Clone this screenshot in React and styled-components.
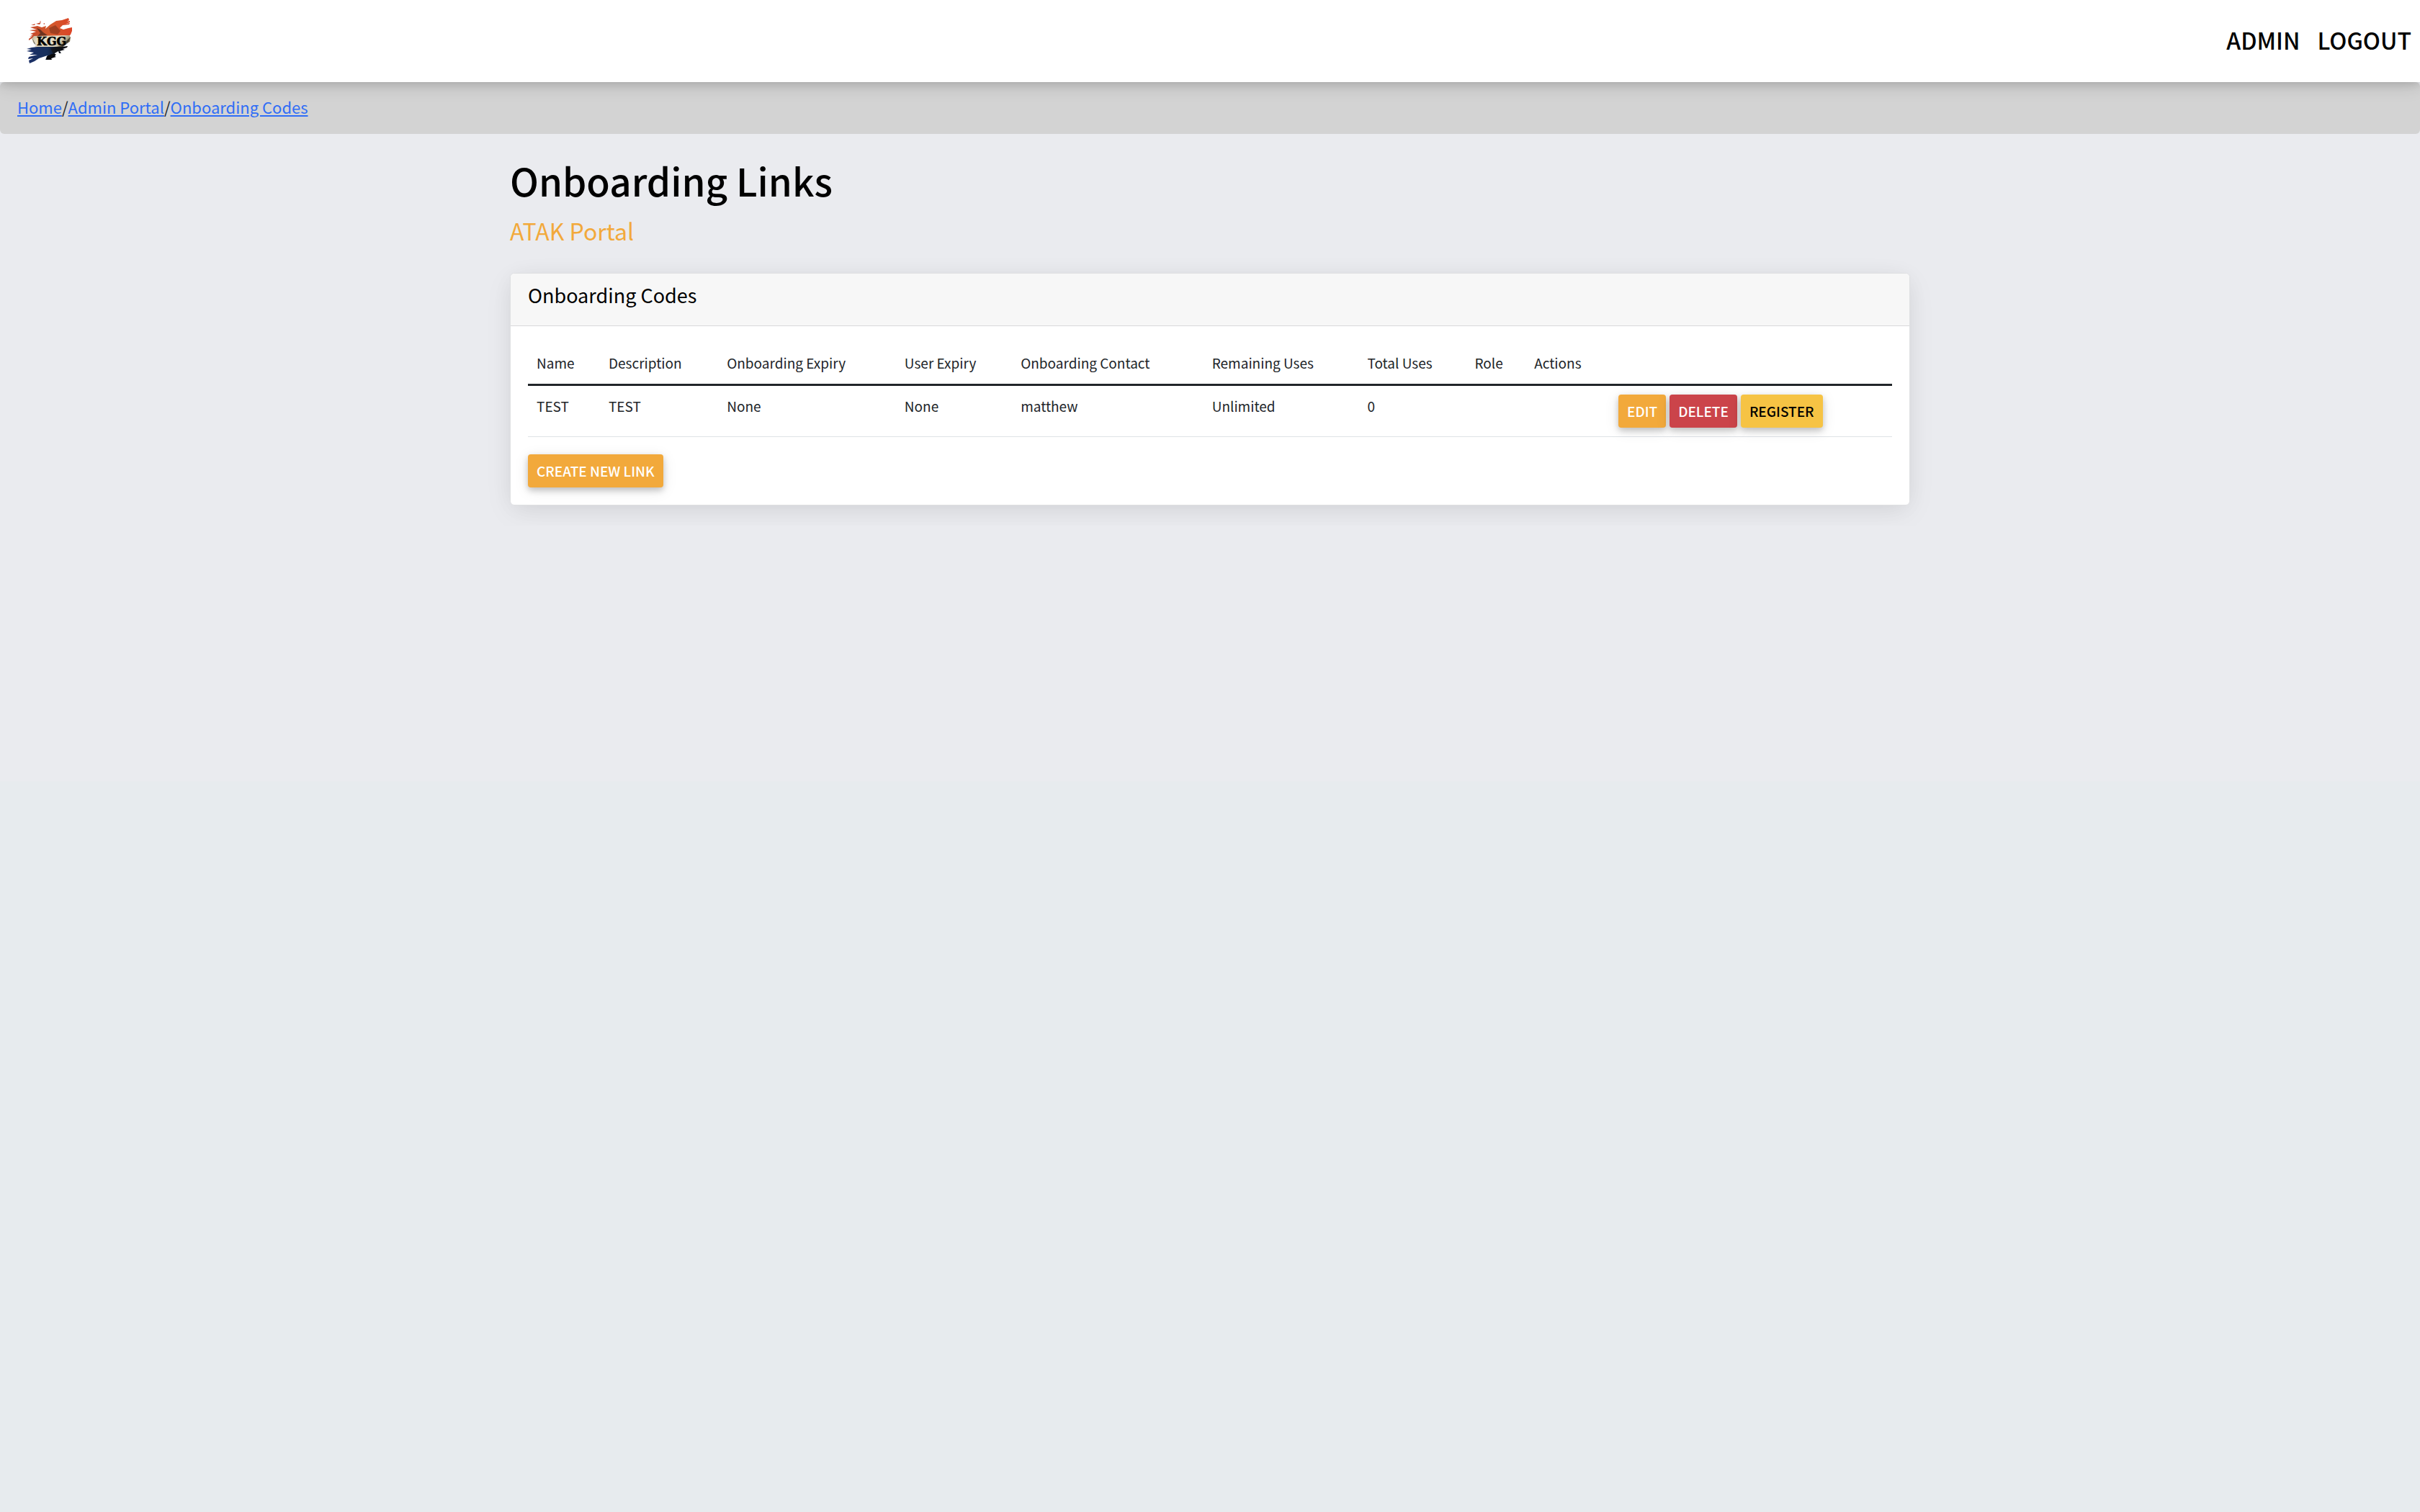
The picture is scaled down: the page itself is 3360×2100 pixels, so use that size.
import React from "react";
import styled, { createGlobalStyle, css } from "styled-components";

const GlobalStyle = createGlobalStyle`
  *, *::before, *::after { box-sizing: border-box; }
  html {
    min-height: 100%;
    background: linear-gradient(#eaebef 1085px, #e7ebee 1085px);
  }
  body {
    margin: 0;
    font-family: "Noto Sans CJK SC", "Noto Sans", sans-serif;
    font-size: 19px;
    line-height: 32px;
    color: #212529;
  }
`;

const Navbar = styled.header`
  position: relative;
  z-index: 1;
  display: flex;
  align-items: center;
  justify-content: space-between;
  height: 114px;
  padding: 0 12px 0 32px;
  background: #fff;
  box-shadow: 0 4px 24px rgba(0, 0, 0, 0.14), 0 2px 12px rgba(0, 0, 0, 0.12);
`;

const Brand = styled.a`
  display: block;
  height: 72px;
`;

const NavLinks = styled.nav`
  display: flex;
  gap: 24px;
  padding-bottom: 4px;
`;

const NavLink = styled.a`
  font-size: 32px;
  line-height: 48px;
  font-weight: 500;
  color: #000;
  text-decoration: none;
`;

const Breadcrumb = styled.nav`
  display: flex;
  height: 72px;
  padding: 18px 24px;
  font-size: 22px;
  background: #d3d3d3;
  border-radius: 6px;
`;

const Crumb = styled.a`
  color: #2f6df6;
  text-decoration: underline;
`;

const Container = styled.main`
  max-width: 1944px;
  margin: 0 auto;
  padding: 28px 0;
`;

const Title = styled.h1`
  margin: 0;
  font-size: 53px;
  line-height: 72px;
  font-weight: 500;
  color: #000;
`;

const Subtitle = styled.h2`
  margin: 10px 0 35px;
  font-size: 32px;
  line-height: 48px;
  font-weight: 400;
  color: #f2a93b;
`;

const Card = styled.section`
  background: #fff;
  border: 1px solid #dfe0e2;
  border-radius: 6px;
  box-shadow: 0 4px 30px -6px rgba(0, 0, 0, 0.07), 0 10px 40px rgba(0, 0, 0, 0.06);
`;

const CardHeader = styled.header`
  padding: 12px 24px 24px;
  background: #f7f7f7;
  border-bottom: 1px solid #d8d9da;
  border-radius: 6px 6px 0 0;
`;

const CardTitle = styled.h3`
  margin: 0;
  font-size: 27px;
  line-height: 36px;
  font-weight: 400;
  color: #000;
`;

const CardBody = styled.div`
  padding: 24px;
`;

const Table = styled.table`
  width: 100%;
  margin-bottom: 24px;
  border-collapse: collapse;
`;

const cell = css`
  padding: 12px;
  text-align: left;
  vertical-align: top;
  white-space: nowrap;
  font-weight: 400;
`;

const HeadCell = styled.th`
  ${cell}
  padding-top: 11px;
  padding-bottom: 13px;
  border-bottom: 3px solid #212529;
`;

const ButtonsHeadCell = styled(HeadCell)`
  width: 392px;
`;

const Cell = styled.td`
  ${cell}
  border-bottom: 1px solid #dee2e6;
`;

const Actions = styled.div`
  display: flex;
  gap: 5px;
`;

const tones = {
  primary: ["#f2a93b", "#fff"],
  danger: ["#cb444a", "#fff"],
  warning: ["#f6c344", "#000"],
};

const Button = styled.button`
  height: 46px;
  padding: 0 12px;
  border: 0;
  border-radius: 4px;
  font: inherit;
  font-weight: 500;
  text-transform: uppercase;
  color: ${({ $tone }) => tones[$tone][1]};
  background: ${({ $tone }) => tones[$tone][0]};
  box-shadow: 0 4px 8px rgba(0, 0, 0, 0.2), 0 4px 20px rgba(0, 0, 0, 0.1);
  cursor: pointer;
`;

function Logo() {
  return (
    <svg width="72" height="72" viewBox="0 0 72 72" role="img" aria-label="KGG">
      <defs>
        <linearGradient id="sand" x1="0" x2="1" y1="0" y2="0.3">
          <stop offset="0" stopColor="#b5a88a" />
          <stop offset="0.2" stopColor="#e2d9c0" />
          <stop offset="0.75" stopColor="#e6dec6" />
          <stop offset="1" stopColor="#8b7d5b" />
        </linearGradient>
        <linearGradient id="flame" x1="0" x2="1">
          <stop offset="0" stopColor="#c4472a" />
          <stop offset="0.5" stopColor="#d3592c" />
          <stop offset="1" stopColor="#dc4527" />
        </linearGradient>
        <linearGradient id="navy" x1="0" x2="1">
          <stop offset="0" stopColor="#1b2f68" />
          <stop offset="0.5" stopColor="#17305c" />
          <stop offset="0.75" stopColor="#111722" />
          <stop offset="1" stopColor="#0b0b0d" />
        </linearGradient>
      </defs>
      <path
        fill="url(#flame)"
        d="M10 17 L20 15 L26 17 L32 15 L31 19 L38 13 L46 8 L54 7 L63 4 L64 7 L61 9 L65 8 L65 10 L59 12 L65 11 L64 13 L55 14 L51 18 L56 20 L63 18 L68 17 L68 22 L66 27 L64 29 L17 29 L8 35 L8 33 L13 29 L9 30 L14 27 L10 26 L18 23 L9 21 L19 20 Z"
      />
      <path fill="#c4472a" d="M18 12 L25 10 L23 13 Z M11 14 L17 12 L16 14 Z M28 12 L30 11 L30 13 Z M23 9 L25 8 L24 10 Z" />
      <path fill="url(#sand)" d="M15 29 L64 28 L66 31 L65 37 L60 39 L54 45 L16 45 L18 41 L14 38 L12 33 Z" />
      <path
        fill="url(#navy)"
        d="M5 47 L12 45 L20 44 L54 44 L62 43 L61 45 L55 47 L58 48 L51 50 L53 53 L50 53 L49 50 L44 53 L45 57 L38 61 L31 62 L34 56 L22 60 L16 64 L9 67 L8 63 L14 60 L7 61 L8 58 L20 55 L9 55 L15 52 L5 50 L12 48 Z"
      />
      <path fill="#3a2418" opacity="0.65" d="M19 18 L24 20 L28 24 L34 28 L20 29 L24 25 Z" />
      <path fill="#6b2a16" opacity="0.5" d="M36 18 L45 14 L52 22 L48 27 L38 25 Z" />
      <path fill="#12100e" opacity="0.6" d="M13 32 L18 42 L15 39 Z M60 36 L66 30 L63 38 L52 47 L42 54 L38 46 L56 42 Z" />
      <path fill="#0b0b0d" d="M33 57 L40 54 L46 54 L43 57 L46 58 L39 60 L40 62 L32 62 Z" />
      <text
        x="19"
        y="42"
        fontFamily="'DejaVu Serif', serif"
        fontSize="16"
        fontWeight="700"
        fill="#000"
        stroke="#000"
        strokeWidth="0.6"
      >
        KGG
      </text>
    </svg>
  );
}

const columns = [
  "Name",
  "Description",
  "Onboarding Expiry",
  "User Expiry",
  "Onboarding Contact",
  "Remaining Uses",
  "Total Uses",
  "Role",
  "Actions",
];

const rows = [["TEST", "TEST", "None", "None", "matthew", "Unlimited", "0", "", ""]];

export default function App() {
  return (
    <>
      <GlobalStyle />
      <Navbar>
        <Brand href="#">
          <Logo />
        </Brand>
        <NavLinks aria-label="Main">
          <NavLink href="#">ADMIN</NavLink>
          <NavLink href="#">LOGOUT</NavLink>
        </NavLinks>
      </Navbar>
      <Breadcrumb aria-label="Breadcrumb">
        <Crumb href="#">Home</Crumb>/<Crumb href="#">Admin Portal</Crumb>/
        <Crumb href="#">Onboarding Codes</Crumb>
      </Breadcrumb>
      <Container>
        <Title>Onboarding Links</Title>
        <Subtitle>ATAK Portal</Subtitle>
        <Card>
          <CardHeader>
            <CardTitle>Onboarding Codes</CardTitle>
          </CardHeader>
          <CardBody>
            <Table>
              <thead>
                <tr>
                  {columns.map((name) => (
                    <HeadCell key={name} scope="col">
                      {name}
                    </HeadCell>
                  ))}
                  <ButtonsHeadCell as="td" />
                </tr>
              </thead>
              <tbody>
                {rows.map((row, r) => (
                  <tr key={r}>
                    {row.map((value, c) => (
                      <Cell key={c}>{value}</Cell>
                    ))}
                    <Cell>
                      <Actions>
                        <Button type="button" $tone="primary">Edit</Button>
                        <Button type="button" $tone="danger">Delete</Button>
                        <Button type="button" $tone="warning">Register</Button>
                      </Actions>
                    </Cell>
                  </tr>
                ))}
              </tbody>
            </Table>
            <Button type="button" $tone="primary">Create new link</Button>
          </CardBody>
        </Card>
      </Container>
    </>
  );
}
